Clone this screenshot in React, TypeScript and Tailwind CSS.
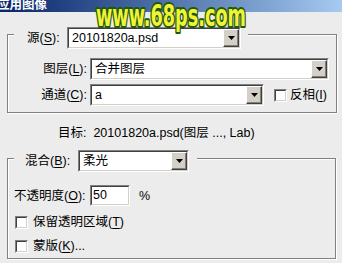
import React from "react";

function Arrow() {
  return (
    <svg width="7" height="4" viewBox="0 0 7 4" className="block">
      <polygon points="0,0 7,0 3.5,4" fill="#000" />
    </svg>
  );
}

function Select({ w, value }: { w: string; value: string }) {
  return (
    <div className={`${w} h-[22px] border border-t-[#808080] border-l-[#808080] border-b-white border-r-white`}>
      <div className="flex h-full border border-t-[#404040] border-l-[#404040] border-b-[#d4d0c8] border-r-[#d4d0c8] bg-white">
        <div className="flex-1 flex items-center pl-[3px] text-[12.5px] text-black leading-none whitespace-nowrap overflow-hidden">
          {value}
        </div>
        <div className="w-[16px] h-full flex items-center justify-center bg-[#d4d0c8] border border-t-white border-l-white border-b-[#404040] border-r-[#404040] shadow-[inset_-1px_-1px_0_#808080]">
          <Arrow />
        </div>
      </div>
    </div>
  );
}

function Checkbox() {
  return (
    <div className="w-[13px] h-[13px] shrink-0 border border-t-[#808080] border-l-[#808080] border-b-white border-r-white">
      <div className="w-full h-full bg-white border border-t-[#404040] border-l-[#404040] border-b-[#d4d0c8] border-r-[#d4d0c8]" />
    </div>
  );
}

function U({ c }: { c: string }) {
  return <span className="underline underline-offset-[2px]">{c}</span>;
}

export default function App() {
  return (
    <div className="relative w-[342px] h-[263px] overflow-hidden bg-[#ececec] text-black text-[12.5px] leading-[14px] font-['Liberation_Sans','Noto_Sans_CJK_SC',sans-serif]">
      {/* title bar */}
      <div className="h-[12px] overflow-hidden bg-gradient-to-r from-[#0a246a] to-[#a6caf0]">
        <div className="-ml-[3px] -mt-[3px] text-[12.5px] leading-[14px] font-bold text-white font-['Noto_Sans_CJK_SC',sans-serif]">
          应用图像
        </div>
      </div>

      <div className="pl-[7px] pr-[5px]">
        {/* group box 1 */}
        <div className="mt-[22px] w-[330px] h-[79px] border border-[#808080] shadow-[inset_1px_1px_0_#fff,1px_1px_0_#fff]">
          <div className="-mt-[8px] ml-[6px] flex w-fit items-center bg-[#ececec] pl-[13px] pr-[7px]">
            <span className="w-[35px] whitespace-nowrap">源(<U c="S" />):</span>
            <div className="ml-[5px]">
              <Select w="w-[174px]" value="20101820a.psd" />
            </div>
          </div>

          <div className="mt-[9px] flex items-center">
            <span className="w-[79px] text-right whitespace-nowrap">图层(<U c="L" />):</span>
            <div className="ml-[3px]">
              <Select w="w-[239px]" value="合并图层" />
            </div>
          </div>

          <div className="mt-[4px] flex items-center">
            <span className="w-[79px] text-right whitespace-nowrap">通道(<U c="C" />):</span>
            <div className="ml-[3px]">
              <Select w="w-[174px]" value="a" />
            </div>
            <div className="ml-[10px]">
              <Checkbox />
            </div>
            <span className="ml-[3px] whitespace-nowrap">反相(<U c="I" />)</span>
          </div>
        </div>

        {/* target */}
        <div className="mt-[11px] h-[18px] flex items-center pl-[51px] whitespace-nowrap">
          目标:&nbsp;&nbsp;20101820a.psd(图层 ..., Lab)
        </div>

        {/* group box 2 */}
        <div className="mt-[16px] w-[329px] h-[101px] border border-[#808080] shadow-[inset_1px_1px_0_#fff,1px_1px_0_#fff]">
          <div className="-mt-[9px] ml-[6px] flex w-fit items-center bg-[#ececec] pl-[11px] pr-[8px]">
            <span className="w-[50px] whitespace-nowrap">混合(<U c="B" />):</span>
            <div className="ml-[3px]">
              <Select w="w-[111px]" value="柔光" />
            </div>
          </div>

          <div className="mt-[13px] flex items-center">
            <span className="ml-[6px] w-[74px] whitespace-nowrap">不透明度(<U c="O" />):</span>
            <div className="ml-[2px] w-[40px] h-[21px] border border-t-[#808080] border-l-[#808080] border-b-white border-r-white">
              <div className="h-full flex items-center pl-[1px] bg-white border border-t-[#404040] border-l-[#404040] border-b-[#d4d0c8] border-r-[#d4d0c8] text-[12.5px] leading-none">
                50
              </div>
            </div>
            <span className="ml-[9px]">%</span>
          </div>

          <div className="mt-[9px] flex items-center pl-[7px]">
            <Checkbox />
            <span className="ml-[5px] whitespace-nowrap">保留透明区域(<U c="T" />)</span>
          </div>
          <div className="mt-[10px] flex items-center pl-[7px]">
            <Checkbox />
            <span className="ml-[5px] whitespace-nowrap">蒙版(<U c="K" />)...</span>
          </div>
        </div>
      </div>

      {/* watermark overlay */}
      <svg className="absolute left-[92px] top-0" width="160" height="34" viewBox="0 0 160 34">
        <text
          x="4"
          y="26"
          textLength="150"
          lengthAdjust="spacingAndGlyphs"
          fontFamily="DejaVu Sans, sans-serif"
          fontWeight="bold"
          fontSize="30"
          fill="#f2f23a"
          stroke="#1f5a05"
          strokeWidth="4"
          strokeLinejoin="round"
          style={{ paintOrder: "stroke fill" }}
        >
          www.68ps.com
        </text>
      </svg>
    </div>
  );
}
